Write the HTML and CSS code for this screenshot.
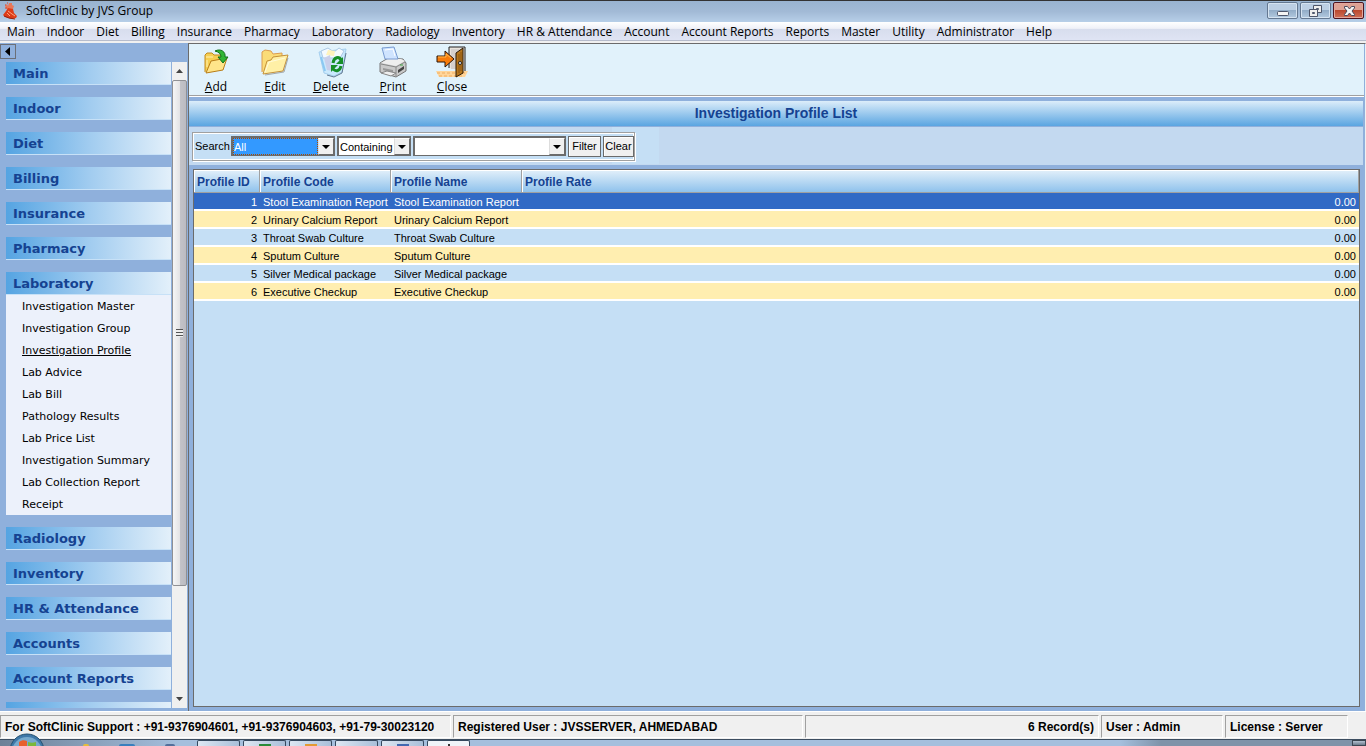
FILE: index.html
```
<!DOCTYPE html>
<html lang="en">
<head>
<meta charset="utf-8">
<title>SoftClinic by JVS Group</title>
<link rel="stylesheet" href="styles.css">
</head>
<body>
<header class="titlebar">
  <svg class="app-icon" width="16" height="18" viewBox="0 0 16 18"><path d="M5 7 3 4l2-2 1 2 1-3h3v2l2 1-1 3z" fill="#e8785a"/><path d="M4 9 6 6l5 1 1 4 3 3-1 2-4 1-7-2-2-2z" fill="#dd3c18"/><path d="M6 9l4 3 3 2M5 11l3 3" stroke="#ffa27c" fill="none"/><path d="M2 14l5 2 6 1" stroke="#96200e" fill="none"/><path d="M3 3h1M5 1h1M3 6h2" stroke="#e33a20"/></svg>
  <span class="app-name">SoftClinic by JVS Group</span>
  <div class="window-buttons">
    <button class="winbtn" aria-label="Minimize"><svg width="28" height="14"><rect x="8.500" y="7.500" width="11" height="4" rx="1" fill="#f4f4f4" stroke="#4e566b"/></svg></button>
    <button class="winbtn" aria-label="Restore"><svg width="28" height="14"><path d="M11.500 1.500h8v7h-8z" fill="#eee" stroke="#4e566b"/><path d="M14.500 4.500h2v1h-2z" fill="#9bb2cd" stroke="#4e566b"/><path d="M7.500 5.500h8v7h-8z" fill="#eee" stroke="#4e566b"/><path d="M10.500 8.500h2v1h-2z" fill="#9bb2cd" stroke="#4e566b"/></svg></button>
    <button class="winbtn winbtn-close" aria-label="Close window"><svg width="28" height="14"><path d="M9.500 2.500h3l2 2.500 2-2.500h3v1.500L17 7l2.500 3.500v1h-3l-2-2.500-2 2.500h-3v-1L12 7 9.500 4z" fill="#f4f4f4" stroke="#4b4a5c"/></svg></button>
  </div>
</header>
<nav class="menubar">
  <button>Main</button><button>Indoor</button><button>Diet</button><button>Billing</button><button>Insurance</button><button>Pharmacy</button><button>Laboratory</button><button>Radiology</button><button>Inventory</button><button>HR &amp; Attendance</button><button>Account</button><button>Account Reports</button><button>Reports</button><button>Master</button><button>Utility</button><button>Administrator</button><button>Help</button>
</nav>
<div class="workspace">
  <aside class="sidebar">
    <button class="collapse" aria-label="Collapse sidebar"><svg width="6" height="9"><path d="M5 0v9L0 4.500z"/></svg></button>
    <div class="side-body">
      <nav class="groups">
        <button class="group">Main</button>
        <button class="group">Indoor</button>
        <button class="group">Diet</button>
        <button class="group">Billing</button>
        <button class="group">Insurance</button>
        <button class="group">Pharmacy</button>
        <div class="open-group">
          <button class="group">Laboratory</button>
          <ul>
            <li><a href="#">Investigation Master</a></li>
            <li><a href="#">Investigation Group</a></li>
            <li><a href="#" class="current">Investigation Profile</a></li>
            <li><a href="#">Lab Advice</a></li>
            <li><a href="#">Lab Bill</a></li>
            <li><a href="#">Pathology Results</a></li>
            <li><a href="#">Lab Price List</a></li>
            <li><a href="#">Investigation Summary</a></li>
            <li><a href="#">Lab Collection Report</a></li>
            <li><a href="#">Receipt</a></li>
          </ul>
        </div>
        <button class="group">Radiology</button>
        <button class="group">Inventory</button>
        <button class="group">HR &amp; Attendance</button>
        <button class="group">Accounts</button>
        <button class="group">Account Reports</button>
        <button class="group" aria-label="Next group"></button>
      </nav>
      <div class="scrollbar">
        <button class="sb-arrow" aria-label="Scroll up"><svg width="7" height="4"><path d="M0 4 3.500 0 7 4z" fill="#444"/></svg></button>
        <div class="sb-track"><div class="sb-thumb"><span class="grip"></span></div></div>
        <button class="sb-arrow" aria-label="Scroll down"><svg width="7" height="4"><path d="M0 0h7L3.500 4z" fill="#444"/></svg></button>
      </div>
    </div>
  </aside>
  <main class="content">
    <div class="toolbar">
      <button class="tool"><svg width="32" height="32" viewBox="0 0 32 32"><path d="M5 26V9l2-2h5l2 2h8v5" fill="#f6cf52" stroke="#c08a20"/><path d="M6 27 11 15l16-3-4 12z" fill="#ffe58a" stroke="#b87d18"/><path d="M6 11h7M7 14v7" stroke="#fff2b4"/><path d="M15 5c6-3 11 1 10 6h3l-5 6-5-6h3c0-3-2-5-6-6z" fill="#2fb534" stroke="#13701b"/></svg><span><u>A</u>dd</span></button>
      <button class="tool"><svg width="32" height="32" viewBox="0 0 32 32"><path d="M3 26V6l3-2 6 1 2 3 9-1v7" fill="#fbdc78" stroke="#dc9c50"/><path d="M4 28 8 15l4-1 2-3 15-2-5 16z" fill="#fff0a6" stroke="#c4913a"/><path d="M6 26 10 16l16-4" stroke="#fffbdc" fill="none"/><path d="M6 29l19-3 4-14" fill="none" stroke="#777" opacity=".6"/></svg><span><u>E</u>dit</span></button>
      <button class="tool tool-delete"><svg width="32" height="32" viewBox="0 0 32 32"><path d="M4 6 31 3l-4 23-8 4-10-3z" fill="#cae9fd" stroke="#a5cfee"/><path d="M6 5 13 2l6 4 5-4 5 3-4 7H8z" fill="#f4faff" stroke="#abc9e5"/><path d="m13 4 7 1-1 5-8-1z" fill="#fff3bd"/><path d="m9 12 6-3 2 16-5-1z" fill="#c9cfea"/><path d="M6 11 10 25" stroke="#8ac8f2" stroke-width="2"/><path d="M18 17c1-6 6-7 8-3" fill="none" stroke="#168f28" stroke-width="3"/><path d="M28 11v7h-7z" fill="#168f28"/><path d="M26 20c-1 5-5 6-8 3" fill="none" stroke="#168f28" stroke-width="3"/><path d="M16 26v-7h7z" fill="#168f28"/><path d="M12 29 19 31 27 27l4-20" stroke="#607890" fill="none"/></svg><span><u>D</u>elete</span></button>
      <button class="tool"><svg width="32" height="32" viewBox="0 0 32 32"><path d="M3 17 11 12l15 1 3 4v8l-10 6-16-5z" fill="#c9c9c9" stroke="#777"/><path d="m4 17 15 3 9-5-4-2-13 0z" fill="#eee"/><path d="M8 13 5 2l12-1 4 12z" fill="#cfe4ff" stroke="#789bd1"/><path d="M8 4 16 3l2 7" stroke="#fff" fill="none"/><path d="M4 18 19 21l9-5M19 21v9" stroke="#888" fill="none"/><path d="m6 22 10 2v3L6 24z" fill="#999"/><path d="m4 27 10 3 5-3-9-2z" fill="#eee" stroke="#888"/><path d="m21 24 6-4v3l-6 4z" fill="#444"/><path d="M23 19h3" stroke="#40a642"/></svg><span><u>P</u>rint</span></button>
      <button class="tool"><svg width="32" height="32" viewBox="0 0 32 32"><path d="M0 25h32l-3 6H3z" fill="#ffd59a"/><path d="M1 27h28M3 30h25" stroke="#efad5f" stroke-dasharray="3 2"/><path d="M13 22V1h16v24" fill="#e9e3dc" stroke="#222"/><path d="M15 3h11v20H15z" fill="#d5d0cd"/><path d="m20 7 7-5v25l-7 4z" fill="#b5761d" stroke="#2a1b08"/><path d="M23 8v19M25 6v19" stroke="#8b5510"/><circle cx="24" cy="17" r="1.500" fill="#fff" stroke="#222"/><path d="M1 10h8V5l9 8-9 8v-5H1z" fill="#f77b0a" stroke="#29170a"/><path d="M2 11h8V8l5 4" stroke="#ffb84d" fill="none"/></svg><span><u>C</u>lose</span></button>
    </div>
    <h1 class="page-title">Investigation Profile List</h1>
    <div class="search-strip">
      <div class="search-back">
        <form class="search">
          <label for="field">Search</label>
          <div class="combo combo-field"><select id="field"><option>All</option></select><span class="drop"></span></div>
          <div class="combo combo-match"><select aria-label="Match"><option>Containing</option></select><span class="drop"></span></div>
          <div class="combo combo-text"><input type="text" aria-label="Search text"><span class="drop"></span></div>
          <button type="button">Filter</button>
          <button type="button">Clear</button>
        </form>
      </div>
    </div>
    <section class="grid">
      <table>
        <colgroup><col class="c-id"><col class="c-text"><col class="c-text"><col></colgroup>
        <thead><tr><th>Profile ID</th><th>Profile Code</th><th>Profile Name</th><th>Profile Rate</th></tr></thead>
        <tbody>
          <tr class="selected"><td>1</td><td>Stool Examination Report</td><td>Stool Examination Report</td><td>0.00</td></tr>
          <tr><td>2</td><td>Urinary Calcium Report</td><td>Urinary Calcium Report</td><td>0.00</td></tr>
          <tr><td>3</td><td>Throat Swab Culture</td><td>Throat Swab Culture</td><td>0.00</td></tr>
          <tr><td>4</td><td>Sputum Culture</td><td>Sputum Culture</td><td>0.00</td></tr>
          <tr><td>5</td><td>Silver Medical package</td><td>Silver Medical package</td><td>0.00</td></tr>
          <tr><td>6</td><td>Executive Checkup</td><td>Executive Checkup</td><td>0.00</td></tr>
        </tbody>
      </table>
    </section>
  </main>
</div>
<footer class="status">
  <span class="st-support">For SoftClinic Support : +91-9376904601, +91-9376904603, +91-79-30023120</span>
  <span class="st-registered">Registered User : JVSSERVER, AHMEDABAD</span>
  <span class="st-records">6 Record(s)</span>
  <span class="st-user">User : Admin</span>
  <span class="st-license">License : Server</span>
</footer>
<div class="taskbar">
  <svg class="orb" width="36" height="13" viewBox="0 0 36 13"><circle cx="18" cy="18" r="17" fill="#3f78a8" stroke="#24506f"/><circle cx="18" cy="19" r="15" fill="#77a9cc"/><path d="M10 13V9c3-2 5-2 8-1v5z" fill="#e8602c"/><path d="M19 13V9c3 1 5 1 8 0v4z" fill="#7bb83a"/></svg>
  <i class="quick q-yellow"></i><i class="quick q-blue"></i><i class="quick q-slate"></i>
  <div class="tasks">
    <i class="task"></i><i class="task t-green"></i><i class="task t-orange"></i><i class="task"></i><i class="task t-blue"></i><i class="task t-active"></i>
  </div>
  <i class="peek"></i>
</div>
</body>
</html>
```
FILE: styles.css
```
* { box-sizing: border-box; }
body {
  margin: 0;
  height: 100vh;
  display: flex;
  flex-direction: column;
  overflow: hidden;
  background: #8fb0dc;
  font: 11px/14px "Liberation Sans", Arial, sans-serif;
  color: #000;
}
button { font: inherit; color: inherit; padding: 0; border: 0; background: none; }
svg { display: block; }

/* Window frame */
.titlebar {
  flex: none;
  height: 22px;
  display: flex;
  align-items: center;
  padding: 0 2px 2px;
  border-top: 1px solid #333;
  background: linear-gradient(#99b4d1, #a2bad6 50%, #b7cfe8);
  font: 12px/18px "Open Sans", "Noto Sans", sans-serif;
}
.app-icon { width: 16px; margin-right: 8px; }
.app-name { flex: 1; }
.window-buttons { display: flex; gap: 2px; align-self: flex-start; padding-top: 1px; }
.winbtn {
  width: 31px;
  height: 17px;
  display: grid;
  place-items: center;
  border: 1px solid #647891;
  border-radius: 2px;
  box-shadow: inset 0 0 0 1px #d5e3f1;
  background: linear-gradient(#bccfe4 50%, #93adc8 50%, #b3cae0);
}
.winbtn-close {
  border-color: #4f1420;
  box-shadow: inset 0 0 0 1px #e2a79d;
  background: linear-gradient(#dda194 45%, #b9452b 45%, #cf6f58);
}
.menubar {
  flex: none;
  height: 19px;
  display: flex;
  gap: 12px;
  padding: 1px 0 0 7px;
  background: linear-gradient(#fff, #eff1f8 36%, #d7dded 37%, #dfe4f4);
  border-bottom: 1px solid #b6bccc;
  font: 12px/18px "Open Sans", "Noto Sans", sans-serif;
  white-space: nowrap;
}
.menubar button { height: 18px; }

/* Navigation sidebar */
.workspace { flex: 1; min-height: 0; display: flex; border-top: 2px solid #f0f0f0; }
.sidebar { width: 188px; flex: none; display: flex; flex-direction: column; }
.collapse {
  width: 16px;
  height: 15px;
  margin: 1px 0 3px;
  display: grid;
  place-items: center;
  border: 1px solid #6b6f78;
}
.side-body { flex: 1; min-height: 0; display: flex; padding: 0 1px 3px 6px; }
.groups { flex: 1; display: flex; flex-direction: column; gap: 12px; overflow: hidden; padding-right: 1px; }
.group {
  flex: none;
  width: 100%;
  height: 23px;
  padding: 1px 0 0 7px;
  border-bottom: 1px solid #c7e1f7;
  background: linear-gradient(90deg, #55a4e2, #a3cdf0 52%, #e3f0fa);
  text-align: left;
  color: #154291;
  font: bold 13px/21px "DejaVu Sans", Verdana, sans-serif;
}
.open-group { flex: none; }
.open-group ul { margin: 0; padding: 0 0 0 16px; list-style: none; background: #ecf1fb; }
.open-group li { height: 22px; padding-top: 1px; }
.open-group a { color: #000; text-decoration: none; font: 11px/21px "DejaVu Sans", Verdana, sans-serif; }
.open-group .current { text-decoration: underline; }
.scrollbar { width: 15px; flex: none; display: flex; flex-direction: column; background: #f0f0f0; }
.sb-arrow { height: 18px; display: grid; place-items: center; }
.sb-track { flex: 1; }
.sb-thumb {
  height: 83%;
  display: grid;
  place-items: center;
  border: 1px solid #8f9094;
  border-radius: 2px;
  background: linear-gradient(90deg, #f6f6f6, #e4e4e6 50%, #c3c3c8 55%, #bbbbc1);
}
.grip { width: 7px; height: 8px; background: repeating-linear-gradient(#555 0 1px, #eee 1px 3px); }

/* Main pane */
.content {
  flex: 1;
  min-width: 0;
  display: flex;
  flex-direction: column;
  border: 1px solid #6b6b6b;
  border-bottom: 0;
  border-right-color: #f0f0f0;
  padding: 0 2px 4px 0;
}
.toolbar {
  flex: none;
  height: 52px;
  margin-right: -1px;
  display: flex;
  gap: 5px;
  background: #e1f2fb;
  border-bottom: 1px solid #a0a0a0;
  box-shadow: 0 1px #fff;
  font: 12px/16px "Open Sans", "Noto Sans", sans-serif;
}
.tool { width: 54px; display: flex; flex-direction: column; align-items: center; gap: 1px; padding-top: 2px; }
.tool-delete { width: 48px; margin-right: 6px; }
.page-title {
  flex: none;
  margin: 5px 0 0;
  height: 25px;
  text-align: center;
  color: #154291;
  background: linear-gradient(#dcedfa, #5aa5e1);
  font: bold 14px/25px "Liberation Sans", Arial, sans-serif;
}
.search-strip { flex: none; height: 39px; border-top: 1px solid #8fb0dc; background: #c3d9f0; }
.search-back { width: 470px; height: 37px; padding: 5px 0 0 3px; background: linear-gradient(90deg, #c3d9f0 90%, #c5dff5 90%); }
.search {
  width: 443px;
  height: 29px;
  display: flex;
  align-items: center;
  gap: 2px;
  padding: 0 0 1px 2px;
  border: 1px solid #a0a0a0;
  background: #c5dff5;
  box-shadow: inset 1px 1px #fff, 1px 1px #fff, inset -1px -1px #fff;
}
.search label { width: 34px; }
.search > button { height: 21px; width: 33px; border: 1px solid #6b6b6b; background: #f0f0f0; box-shadow: inset 1px 1px #fff; }
.search > button:last-child { width: 31px; }
.combo { height: 20px; display: flex; border: 1px solid #6b6b6b; border-width: 2px 1px 1px 2px; background: #fff; }
.combo-field { width: 104px; }
.combo-match { width: 74px; }
.combo-text { width: 153px; }
.combo select, .combo input {
  appearance: none;
  flex: 1;
  min-width: 0;
  border: 0;
  border-radius: 0;
  outline: 0;
  padding: 0 1px;
  background: #fff;
  color: #000;
  font: inherit;
}
.combo-field select { background: #3399ff; color: #fff; border: 1px dotted #a84c00; padding: 0; }
.drop { flex: none; width: 16px; display: grid; place-items: center; background: #f0f0f0; border: 1px solid #6b6b6b; border-color: #fff #6b6b6b #6b6b6b #ddd; }
.drop::after { content: ""; border: 4px solid transparent; border-top-color: #000; border-bottom: 0; }

/* Profile list */
.grid { flex: 1; min-height: 0; margin: 4px 3px 0 4px; border: 1px solid #6b6b6b; background: #c5dff5; overflow: hidden; }
table { width: 100%; border-collapse: separate; border-spacing: 0; table-layout: fixed; }
.c-id { width: 66px; }
.c-text { width: 131px; }
th {
  height: 23px;
  padding: 2px 3px 0;
  text-align: left;
  font-size: 12px;
  white-space: nowrap;
  color: #154291;
  background: linear-gradient(#e3f0fa, #8fc2ec);
  border: solid #a0a0a0;
  border-width: 0 1px 1px 0;
  box-shadow: inset 1px 1px #fff;
}
td { height: 18px; padding: 2px 3px 0; border-bottom: 2px solid #fff; line-height: 14px; white-space: nowrap; background: #c5dff5; }
td:first-child, td:last-child { text-align: right; }
tr:nth-child(even) td { background: #ffeeb0; }
.selected td { background: #316ac5; color: #fff; }

/* Status bar */
.status {
  flex: none;
  height: 28px;
  display: flex;
  gap: 2px;
  padding: 3px 18px 1px 0;
  border-top: 1px solid #fff;
  background: #f0f0f0;
  font-weight: bold;
  font-size: 12px;
  white-space: nowrap;
}
.status span { border: 1px solid; border-color: #a0a0a0 #fff #fff #a0a0a0; padding: 0 4px; line-height: 22px; }
.st-support { width: 451px; }
.st-registered { width: 350px; }
.st-records { flex: 1; text-align: right; }
.st-user { width: 122px; }
.st-license { width: 123px; }

/* Desktop taskbar */
.taskbar {
  flex: none;
  height: 7px;
  position: relative;
  display: flex;
  padding-left: 83px;
  border-top: 1px solid #3c4d60;
  background: linear-gradient(90deg, #6d8097, #a5bfdd 180px, #a5bfdd 82%, #7f93a9 85%);
}
.orb { position: absolute; left: 9px; bottom: 0; }
.quick { width: 16px; height: 2px; align-self: flex-end; margin-right: 30px; border-radius: 4px 4px 0 0; }
.q-yellow { width: 6px; background: #e5bd3b; }
.q-blue { background: #397fbd; }
.q-slate { width: 10px; margin-right: 22px; background: #536f9b; }
.tasks { display: flex; gap: 3px; flex: 1; }
.task { width: 43px; display: flex; align-items: flex-end; justify-content: center; border: 1px solid #35485e; border-bottom: 0; border-radius: 2px 2px 0 0; background: linear-gradient(90deg, #dde7f3, #a9bfd9); }
.task::after { content: ""; width: 12px; height: 2px; }
.t-green::after { background: #298b39; }
.t-orange::after { background: #e39a32; }
.t-blue::after { background: #4268b0; }
.t-active { background: #f0f4f9; }
.t-active::after { width: 2px; background: #333; }
.peek { width: 14px; background: linear-gradient(#b3c1d0, #6c7b8c); border: 1px solid #3b4652; }
```
